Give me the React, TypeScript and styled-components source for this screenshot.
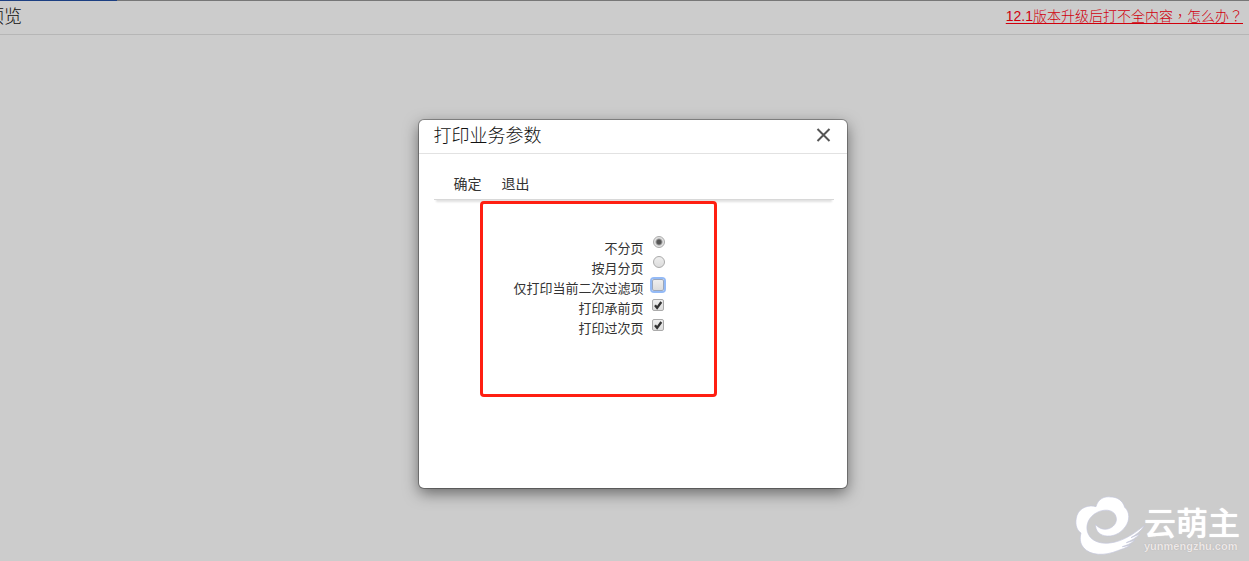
import React from "react";
import styled, { createGlobalStyle } from "styled-components";

const GlobalStyle = createGlobalStyle`
  * { box-sizing: border-box; }
  body {
    margin: 0;
    background: #ccc;
    color: #333;
    font-family: "Liberation Sans", "Noto Sans CJK SC", sans-serif;
    font-size: 13px;
  }
`;

const Page = styled.div`
  min-height: 100vh;
  display: flex;
  flex-direction: column;
  overflow: hidden;
`;

const Progress = styled.div`
  height: 1px;
  background: #777;
`;

const ProgressBar = styled.div`
  width: 117px;
  height: 1px;
  background: #1c3f82;
`;

const TopBar = styled.header`
  display: flex;
  justify-content: space-between;
  height: 34px;
  padding-right: 6px;
  border-bottom: 1px solid #b6b6b6;
`;

const PageTitle = styled.h1`
  margin: 0 0 0 -14px;
  color: #111;
  font-size: 18px;
  font-weight: 300;
  line-height: 32px;
`;

const HelpLink = styled.a`
  color: #d0000c;
  font-size: 14px;
  font-weight: 300;
  line-height: 28px;
  text-underline-offset: 2px;
`;

const Punctuation = styled.span`
  font-family: "Noto Sans CJK TC", sans-serif;
`;

const Main = styled.main`
  flex: 1;
  display: flex;
  flex-direction: column;
  justify-content: space-between;
`;

const Dialog = styled.section`
  width: 428px;
  min-height: 368px;
  margin: 85px auto 0;
  position: relative;
  left: 8px;
  background: #fff;
  border-radius: 5px;
  box-shadow: 0 0 0 1px rgba(0, 0, 0, 0.3), 0 5px 15px rgba(0, 0, 0, 0.5);
`;

const DialogHeader = styled.div`
  display: flex;
  justify-content: space-between;
  align-items: center;
  height: 34px;
  padding: 0 16px 2px 15px;
  border-bottom: 1px solid #e2e2e2;
`;

const DialogTitle = styled.h2`
  margin: 0;
  color: #111;
  font-size: 18px;
  line-height: 30px;
  font-weight: 300;
`;

const CloseButton = styled.button`
  display: flex;
  padding: 0 0 2px;
  border: 0;
  background: none;
`;

const Toolbar = styled.div`
  display: flex;
  gap: 20px;
  height: 31px;
  margin: 15px 13px 0 15px;
  padding: 0 20px;
  border-bottom: 1px solid #d8d8d8;
  box-shadow: 0 4px 2px -2px rgba(0, 0, 0, 0.12);
`;

const ToolButton = styled.button`
  padding: 0;
  border: 0;
  background: none;
  color: #333;
  font-family: inherit;
  font-size: 14px;
  line-height: 30px;
`;

const Options = styled.form`
  width: 237px;
  min-height: 196px;
  margin: 1px 0 0 61px;
  padding: 31px 49px 0 0;
  border: 3px solid #ff1f12;
  border-radius: 4px;
`;

const Option = styled.div`
  display: flex;
  justify-content: flex-end;
  align-items: flex-start;
  gap: 8px;
  height: 20px;
`;

const OptionLabel = styled.label`
  line-height: 28px;
  white-space: nowrap;
`;

const Control = styled.input`
  appearance: none;
  flex: none;
  width: 12px;
  height: 12px;
  margin: 4px 1px 0 0;
  border: 1px solid #aaa;
  border-radius: 2px;
  background: linear-gradient(#eee, #dcdcdc);
  outline: none;

  &[type="radio"] {
    margin: 1px 0 0 1px;
    border-radius: 50%;
  }
  &[type="radio"]:checked {
    background: radial-gradient(circle, #555 0 2px, #e2e2e2 4px);
  }
  &:focus {
    border-color: #9aa6ba;
    box-shadow: 0 0 0 2px #94baf6;
  }
`;

const CheckWrap = styled.span`
  display: grid;
  > * { grid-area: 1 / 1; }
  svg { margin: 4px 0 0; pointer-events: none; }
`;

const Brand = styled.footer`
  display: flex;
  align-self: flex-end;
  padding: 0 9px 1px 0;
  color: #fff;
`;

const BrandWords = styled.div`
  margin: 18px 0 0 -6px;
`;

const BrandName = styled.div`
  font-size: 32px;
  line-height: 32px;
  font-weight: 500;
  text-shadow: 0 0 1px #fff;
`;

const BrandDomain = styled.div`
  color: #ece8e8;
  font-size: 11px;
  line-height: 12px;
  font-weight: 700;
  text-shadow: 0 0 1px #a9a0a0;
`;

const CheckMark = () => (
  <svg width="12" height="12" viewBox="0 0 12 12" aria-hidden="true">
    <path d="M3 6.2 5.1 8.8 9.3 3" fill="none" stroke="#333" strokeWidth="2.3" />
  </svg>
);

const CloudLogo = () => (
  <svg width="80" height="70" viewBox="0 0 240 210" aria-hidden="true">
    <path
      fill="#fff"
      stroke="#c3c5dc"
      strokeWidth="2"
      d="M78 50C84 26 104 18 122 21C139 20 159 31 164 52C180 65 180 92 166 110C151 132 126 142 103 137C86 133 76 120 77 104C89 117 104 121 119 115C136 108 144 91 136 75C127 57 99 57 80 68C57 80 47 103 52 124C58 151 88 163 119 159C157 155 190 133 224 106C213 123 199 134 183 143L209 132C197 145 183 152 169 158L194 151C183 161 170 166 157 170L181 166C168 174 154 178 143 182C105 198 60 198 40 172C30 160 29 145 33 129C18 120 14 97 21 76C29 53 57 43 78 50Z"
    />
  </svg>
);

const options = [
  { id: "no-paging", label: "不分页", type: "radio", checked: true },
  { id: "by-month", label: "按月分页", type: "radio" },
  { id: "filtered", label: "仅打印当前二次过滤项", type: "checkbox", focused: true },
  { id: "carry-forward", label: "打印承前页", type: "checkbox", checked: true },
  { id: "carry-next", label: "打印过次页", type: "checkbox", checked: true },
];

export default function App() {
  return (
    <Page>
      <GlobalStyle />
      <Progress><ProgressBar /></Progress>
      <TopBar>
        <PageTitle>预览</PageTitle>
        <HelpLink href="#help">
          12.1版本升级后打不全内容<Punctuation>，</Punctuation>怎么办<Punctuation>？</Punctuation>
        </HelpLink>
      </TopBar>
      <Main>
        <Dialog role="dialog" aria-labelledby="dialog-title">
          <DialogHeader>
            <DialogTitle id="dialog-title">打印业务参数</DialogTitle>
            <CloseButton type="button" aria-label="关闭">
              <svg width="15" height="14" viewBox="0 0 15 14">
                <path d="M1.5 1 13.5 13M13.5 1 1.5 13" stroke="#555" strokeWidth="2" />
              </svg>
            </CloseButton>
          </DialogHeader>
          <Toolbar>
            <ToolButton type="button">确定</ToolButton>
            <ToolButton type="button">退出</ToolButton>
          </Toolbar>
          <Options>
            {options.map((o) => (
              <Option key={o.id}>
                <OptionLabel htmlFor={o.id}>{o.label}</OptionLabel>
                <CheckWrap>
                  <Control
                    id={o.id}
                    type={o.type}
                    name={o.type === "radio" ? "paging" : o.id}
                    defaultChecked={o.checked}
                    autoFocus={o.focused}
                  />
                  {o.type === "checkbox" && o.checked && <CheckMark />}
                </CheckWrap>
              </Option>
            ))}
          </Options>
        </Dialog>
        <Brand>
          <CloudLogo />
          <BrandWords>
            <BrandName>云萌主</BrandName>
            <BrandDomain>yunmengzhu.com</BrandDomain>
          </BrandWords>
        </Brand>
      </Main>
    </Page>
  );
}
